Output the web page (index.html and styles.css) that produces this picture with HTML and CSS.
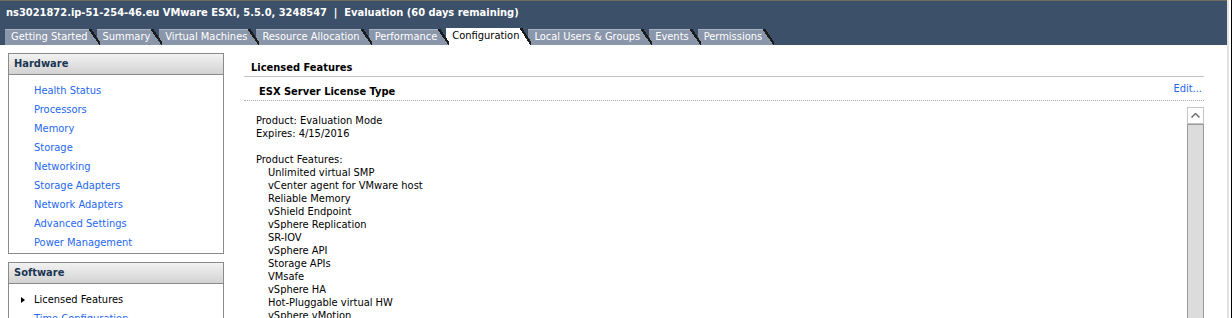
FILE: index.html
```html
<!DOCTYPE html>
<html lang="en">
<head>
    <meta charset="UTF-8">
    <title>vSphere Client - Configuration</title>
    <link rel="stylesheet" href="styles.css">
</head>
<body>

    <div class="window">
        <div class="app">
            <!-- Barre de titre + onglets -->
            <header class="topbar">
                <div class="title">ns3021872.ip-51-254-46.eu VMware ESXi, 5.5.0, 3248547 &nbsp;|&nbsp; Evaluation (60 days remaining)</div>
                <nav class="tabs">
                    <span class="tab">Getting Started</span>
                    <span class="tab">Summary</span>
                    <span class="tab">Virtual Machines</span>
                    <span class="tab">Resource Allocation</span>
                    <span class="tab">Performance</span>
                    <span class="tab active">Configuration</span>
                    <span class="tab">Local Users &amp; Groups</span>
                    <span class="tab">Events</span>
                    <span class="tab">Permissions</span>
                </nav>
            </header>

            <div class="workspace">
                <!-- Menu de gauche -->
                <aside class="sidebar">
                    <section class="group">
                        <h2>Hardware</h2>
                        <ul>
                            <li><a href="#">Health Status</a></li>
                            <li><a href="#">Processors</a></li>
                            <li><a href="#">Memory</a></li>
                            <li><a href="#">Storage</a></li>
                            <li><a href="#">Networking</a></li>
                            <li><a href="#">Storage Adapters</a></li>
                            <li><a href="#">Network Adapters</a></li>
                            <li><a href="#">Advanced Settings</a></li>
                            <li><a href="#">Power Management</a></li>
                        </ul>
                    </section>
                    <section class="group">
                        <h2>Software</h2>
                        <ul>
                            <li class="current">Licensed Features</li>
                            <li><a href="#">Time Configuration</a></li>
                        </ul>
                    </section>
                </aside>

                <!-- Détails de la licence -->
                <main class="details">
                    <h3 class="section-title">Licensed Features</h3>
                    <div class="license-head">
                        <span>ESX Server License Type</span>
                        <a href="#">Edit...</a>
                    </div>
                    <div class="license-box">
                        <div class="license-text">
                            <p>Product: Evaluation Mode<br>Expires: 4/15/2016</p>
                            <p>Product Features:</p>
                            <ul>
                                <li>Unlimited virtual SMP</li>
                                <li>vCenter agent for VMware host</li>
                                <li>Reliable Memory</li>
                                <li>vShield Endpoint</li>
                                <li>vSphere Replication</li>
                                <li>SR-IOV</li>
                                <li>vSphere API</li>
                                <li>Storage APIs</li>
                                <li>VMsafe</li>
                                <li>vSphere HA</li>
                                <li>Hot-Pluggable virtual HW</li>
                                <li>vSphere vMotion</li>
                            </ul>
                        </div>
                        <div class="scrollbar">
                            <div class="scroll-up">
                                <svg width="9" height="5" viewBox="0 0 9 5"><path d="M0.5 4.5 L4.5 0.5 L8.5 4.5" fill="none" stroke="#666" stroke-width="1.4"/></svg>
                            </div>
                            <div class="scroll-track"></div>
                        </div>
                    </div>
                </main>
            </div>
        </div>
        <div class="edge"></div>
    </div>

</body>
</html>
```
FILE: styles.css
```css
/* Page et police */
body {
    margin: 0;
    padding: 0;
    background-color: white;
    font-family: "DejaVu Sans Condensed", "DejaVu Sans", sans-serif;
    font-stretch: condensed;
    font-size: 11px;
    color: black;
    overflow: hidden;
}

.window {
    display: flex;
    height: 318px;
}

.app {
    width: 1227px;
    flex-shrink: 0;
}

/* Bord droit de la fenêtre */
.edge {
    width: 2px;
    border-left: 2px solid #e2e2e2;
    border-right: 1px solid black;
}

/* En-tête */
.topbar {
    background-color: #3c5069;
    border-top: 1px solid #6e6a5c;
    height: 44px;
    display: flex;
    flex-direction: column;
}

.title {
    color: white;
    font-weight: bold;
    font-size: 11px;
    padding: 4px 0 0 6px;
    line-height: 16px;
    height: 24px;
}

/* Onglets */
.tabs {
    display: flex;
    align-items: flex-end;
    padding-left: 5px;
    height: 20px;
}

.tab {
    position: relative;
    height: 15px;
    line-height: 14px;
    padding: 0 1px 0 6px;
    margin-right: 8px;
    background-color: #8a96aa;
    border-top: 1px solid #a9b2c1;
    color: white;
    white-space: nowrap;
}

.tab::after {
    content: "";
    position: absolute;
    top: -1px;
    bottom: 0;
    right: -11px;
    width: 11px;
    z-index: 1;
    background: linear-gradient(to top right, #8a96aa 0 47%, #1c1c1c 47% 60%, transparent 60%);
}

.tab.active {
    background-color: white;
    border-top-color: white;
    color: black;
    height: 16px;
}

.tab.active::after {
    background: linear-gradient(to top right, white 0 47%, #1c1c1c 47% 60%, transparent 60%);
}

/* Zone principale */
.workspace {
    display: flex;
    padding: 8px 23px 0 8px;
    gap: 20px;
}

/* Menu de gauche */
.sidebar {
    width: 216px;
    flex-shrink: 0;
    display: flex;
    flex-direction: column;
    gap: 8px;
}

.group {
    border: 1px solid #8a8a8a;
}

.group h2 {
    margin: 0;
    height: 20px;
    line-height: 20px;
    padding-left: 5px;
    font-size: 11px;
    color: #1b3552;
    background: linear-gradient(#f2f2f2, #d2d2d2);
    border-bottom: 1px solid #8a8a8a;
}

.group ul {
    list-style: none;
    margin: 0;
    padding: 6px 0 1px 25px;
}

.group li {
    line-height: 19px;
    height: 19px;
}

.group a {
    color: #2468f2;
    text-decoration: none;
}

.group li.current {
    position: relative;
    color: black;
}

.group li.current::before {
    content: "";
    position: absolute;
    left: -13px;
    top: 7px;
    border-left: 4px solid black;
    border-top: 3px solid transparent;
    border-bottom: 3px solid transparent;
}

/* Détails */
.details {
    flex: 1;
}

.section-title {
    margin: 0;
    font-size: 11px;
    padding: 6px 0 0 7px;
    line-height: 17px;
    border-bottom: 1px solid #c3c3c3;
}

.license-head {
    display: flex;
    justify-content: space-between;
    align-items: flex-start;
    padding: 7px 2px 0 15px;
    line-height: 16px;
    font-weight: bold;
    border-bottom: 1px dotted #a8a8a8;
}

.license-head a {
    font-weight: normal;
    color: #2468f2;
    text-decoration: none;
    margin-top: -3px;
}

.license-box {
    display: flex;
    margin-top: 6px;
}

.license-text {
    flex: 1;
    padding: 7px 0 0 12px;
    line-height: 13px;
}

.license-text p {
    margin: 0 0 13px;
}

.license-text ul {
    list-style: none;
    margin: -13px 0 0;
    padding-left: 12px;
}

/* Barre de défilement */
.scrollbar {
    width: 17px;
    display: flex;
    flex-direction: column;
}

.scroll-up {
    height: 15px;
    border: 1px solid #c4c4c4;
    background-color: white;
    display: flex;
    align-items: center;
    justify-content: center;
}

.scroll-track {
    height: 200px;
    background-color: #dcdcdc;
    border: 1px solid #9a9a9a;
}
```
